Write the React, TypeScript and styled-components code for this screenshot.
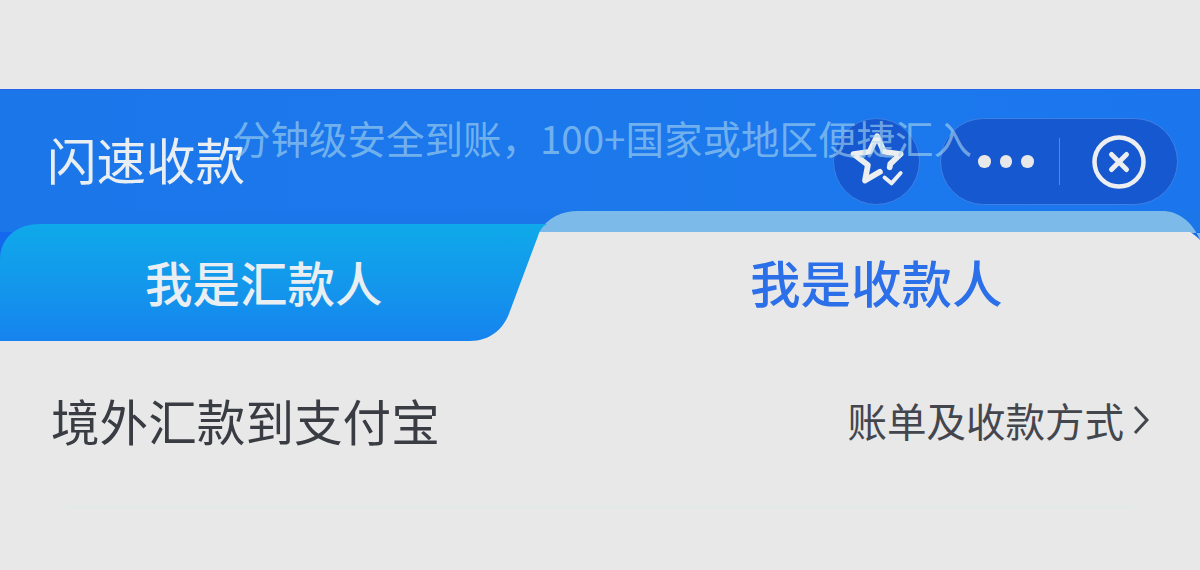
import React from "react";
import styled, { createGlobalStyle } from "styled-components";

const Global = createGlobalStyle`
  html, body { margin: 0; padding: 0; background: #e8e8e8; }
  body { font-family: "Noto Sans CJK SC", "Noto Sans", sans-serif; overflow: hidden; }
`;

const Page = styled.div`
  width: 1200px;
  height: 570px;
  padding-top: 89px;
  box-sizing: border-box;
  background: #e8e8e8;
  overflow: hidden;
`;

const Header = styled.header`
  position: relative;
  height: 152px;
  box-sizing: border-box;
  padding: 28px 22px 0 47px;
  display: flex;
  align-items: flex-start;
  background: linear-gradient(90deg, #1b76ea 0%, #1c79ec 60%, #1b76ee 100%);
  border-top: 1px solid #2566e6;
`;

const Title = styled.h1`
  margin: 0;
  flex: 1;
  font-size: 49.5px;
  line-height: 82px;
  font-weight: 400;
  color: #e9eef2;
`;

const Ticker = styled.div`
  position: absolute;
  left: 232px;
  top: 18px;
  font-size: 38.5px;
  line-height: 58px;
  white-space: nowrap;
  color: rgba(170, 215, 240, 0.62);
  z-index: 2;
`;

const Actions = styled.div`
  display: flex;
  gap: 20px;
  position: relative;
`;

const RoundButton = styled.button`
  width: 87px;
  height: 87px;
  padding: 0;
  border-radius: 50%;
  background: #1658d0;
  border: 1px solid #3e80e4;
  box-sizing: border-box;
  display: flex;
  align-items: center;
  justify-content: center;
`;

const Capsule = styled.div`
  width: 238px;
  height: 87px;
  border-radius: 44px;
  background: #1658d0;
  border: 1px solid #3e80e4;
  box-sizing: border-box;
  display: flex;
  align-items: center;
`;

const MoreSlot = styled.div`
  width: 118px;
  display: flex;
  justify-content: center;
  gap: 9px;
  padding-left: 12px;
  box-sizing: border-box;
`;

const Dot = styled.span`
  width: 12.5px;
  height: 12.5px;
  border-radius: 50%;
  background: #e8e8e8;
`;

const Separator = styled.span`
  width: 1px;
  height: 47px;
  background: #4e8ae2;
`;

const CloseSlot = styled.div`
  flex: 1;
  display: flex;
  justify-content: center;
`;

const TabBar = styled.div`
  position: relative;
  margin-top: -30px;
  height: 130px;
  display: flex;
  align-items: flex-end;
  background: linear-gradient(#1b76ea 0 21px, #1368ee 21px 50px, #e8e8e8 50px);
`;

const ActiveTab = styled.div`
  position: relative;
  z-index: 1;
  width: 547px;
  height: 117px;
  flex: none;
  box-sizing: border-box;
  padding: 0 0 0 145px;
  clip-path: path("M0 36 C0 13 18 0 40 0 H547 C543 2 540 5 538 12 L510 87 C504 105 490 117 470 117 H0 Z");
  background: linear-gradient(180deg, #0fa9ea 0%, #1396ec 55%, #1683ee 100%);
  color: #e8eef2;
  font-size: 47.5px;
  font-weight: 500;
  line-height: 116px;
`;

const PlainTab = styled.div`
  position: relative;
  z-index: 0;
  margin-left: -37px;
  flex: 1;
  height: 130px;
  box-sizing: border-box;
  padding-left: 240px;
  color: #2b6fe9;
  font-size: 50.5px;
  font-weight: 500;
  line-height: 140px;
`;

const TabShape = styled.svg`
  position: absolute;
  left: 0;
  top: 0;
  z-index: -1;
`;

const TabText = styled.span`
  position: relative;
`;

const InfoRow = styled.div`
  margin-top: 29px;
  padding: 0 51px 0 51px;
  display: flex;
  align-items: center;
  justify-content: space-between;
`;

const RowTitle = styled.div`
  font-size: 48.6px;
  line-height: 100px;
  color: #3a3c43;
`;

const RowLink = styled.div`
  display: flex;
  align-items: center;
  gap: 9px;
  font-size: 39.5px;
  line-height: 100px;
  color: #44464e;
`;

const Rule = styled.div`
  margin: 35px 65px 0;
  height: 4px;
  background: #e2e9e6;
`;

export default function App() {
  return (
    <Page>
      <Global />
      <Header>
        <Title>闪速收款</Title>
        <Ticker>分钟级安全到账，100+国家或地区便捷汇入</Ticker>
        <Actions>
          <RoundButton aria-label="收藏">
            <svg width="69" height="69" viewBox="0 0 60 60" fill="none" stroke="#eceef0" strokeWidth="5" strokeLinecap="round" strokeLinejoin="round">
              <path d="M33 39 L20 46.5 L22.5 33 L10 23.5 L24 21.5 L30.5 8 L36.5 21.5 L51 23.5 L42 32 L41.5 35" />
              <path d="M37 44 L43 49 L51 40" strokeWidth="3.4" />
            </svg>
          </RoundButton>
          <Capsule>
            <MoreSlot>
              <Dot />
              <Dot />
              <Dot />
            </MoreSlot>
            <Separator />
            <CloseSlot>
              <svg width="56" height="56" viewBox="0 0 56 56" fill="none" stroke="#eceef0" strokeLinecap="round">
                <circle cx="28" cy="28" r="24.5" strokeWidth="4.5" />
                <path d="M20.5 20.5 L35.5 35.5 M35.5 20.5 L20.5 35.5" strokeWidth="5" />
              </svg>
            </CloseSlot>
          </Capsule>
        </Actions>
      </Header>
      <TabBar>
        <ActiveTab>我是汇款人</ActiveTab>
        <PlainTab>
          <TabShape width="690" height="130" viewBox="0 0 690 130">
            <path d="M28 22 C38 6 52 0 68 0 H652 C668 0 682 10 690 29 V22 Z" fill="#7cbbe9" />
            <path d="M0 21 H680 C684 23 687 26 690 29 V130 H0 Z" fill="#e8e8e8" />
          </TabShape>
          <TabText>我是收款人</TabText>
        </PlainTab>
      </TabBar>
      <InfoRow>
        <RowTitle>境外汇款到支付宝</RowTitle>
        <RowLink>
          账单及收款方式
          <svg width="16" height="30" viewBox="0 0 16 30" fill="none" stroke="#44464e" strokeWidth="3">
            <path d="M2 2 L14 15 L2 28" />
          </svg>
        </RowLink>
      </InfoRow>
      <Rule />
    </Page>
  );
}
